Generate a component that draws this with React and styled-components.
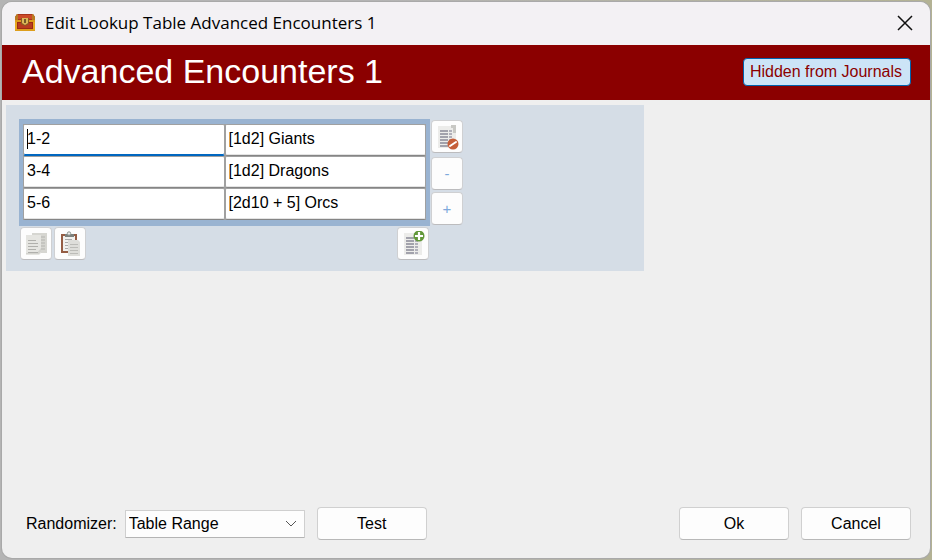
import { useState } from "react";
import styled, { createGlobalStyle } from "styled-components";

const ROWS = [
  { range: "1-2", result: "[1d2] Giants" },
  { range: "3-4", result: "[1d2] Dragons" },
  { range: "5-6", result: "[2d10 + 5] Orcs" },
];

const ChestIcon = () => (
  <svg width="20" height="17" viewBox="0 0 20 17" aria-hidden="true">
    <path d="M2 0h16l2 3v4H0V3z" fill="#a8321a" />
    <path d="M3 1h14v4H3z" fill="#cb4a28" />
    <path d="M1 8h18v8H1z" fill="#9c2a16" />
    <path d="M3 9h14v5H3z" fill="#b93c20" />
    <path d="M0 6h20v2H0zM0 15h20v2H0z" fill="#dd9e1c" />
    <path d="M0 3l2-3h1v6H0zM20 3l-2-3h-1v6h3z" fill="#b87a20" />
    <path d="M0 8h2v8H0zM18 8h2v8h-2z" fill="#e8aa22" />
    <path d="M6 4h8v6l-4 2-4-2z" fill="#8c5a24" />
    <path d="M7 4h6v5l-3 2-3-2z" fill="#dcb858" />
    <path d="M9 5h2v4H9z" fill="#75592a" />
  </svg>
);

const CloseIcon = () => (
  <svg width="16" height="16" viewBox="0 0 16 16" aria-hidden="true">
    <path d="M1 1l14 14M15 1L1 15" stroke="#111" strokeWidth="1.5" fill="none" />
  </svg>
);

const SheetRows = () => (
  <>
    <path d="M3 2h18v22H3z" fill="#ececea" />
    <path
      d="M5 6h8v2H5zM5 9h8v2H5zM5 12h8v2H5zM5 15h8v2H5zM5 18h8v2H5zM5 21h8v2H5z"
      fill="#a2a2ac"
    />
    <path
      d="M14 6h3v2h-3zM14 9h3v2h-3zM14 12h3v2h-3zM14 15h3v2h-3zM14 18h3v2h-3zM14 21h3v2h-3z"
      fill="#b0b0ba"
    />
  </>
);

const RemoveTableIcon = () => (
  <svg width="24" height="26" viewBox="0 0 24 26" aria-hidden="true">
    <SheetRows />
    <path d="M16 1h5v8h-3V4h-2z" fill="#c8c8c4" />
    <circle cx="18" cy="20" r="5.5" fill="#c65f3a" />
    <path d="M15 22l6-4" stroke="#fff" strokeWidth="2" strokeLinecap="round" />
  </svg>
);

const AddTableIcon = () => (
  <svg width="24" height="26" viewBox="0 0 24 26" aria-hidden="true">
    <SheetRows />
    <circle cx="18" cy="5" r="5.5" fill="#62983a" />
    <path d="M14 5h8M18 1v8" stroke="#fff" strokeWidth="2.2" />
  </svg>
);

const CopyIcon = () => (
  <svg width="24" height="26" viewBox="0 0 24 26" aria-hidden="true">
    <path d="M8 2h15v20H8z" fill="#d6d6d1" />
    <path d="M17 6h4M17 9h4M17 12h4M17 15h4M17 18h4" stroke="#b4b4b0" />
    <path d="M2 4h15v18l-2 2H2z" fill="#e5e5e1" />
    <path d="M2 23h13l2-2v-4l-4 5H2z" fill="#d3d3ce" />
    <path
      d="M4 9.5h8M4 12.5h10M4 15.5h10M4 18.5h8M4 21.5h10"
      stroke="#b0b0ac"
    />
  </svg>
);

const PasteIcon = () => (
  <svg width="24" height="26" viewBox="0 0 24 26" aria-hidden="true">
    <path d="M3 3h16v19H3z" fill="#955d44" />
    <path d="M5 5h12v15H5z" fill="#f1f1ee" />
    <path d="M7 3h9v3H7z" fill="#7d817d" />
    <circle cx="11" cy="2.5" r="1.7" fill="#eee" stroke="#8d9590" />
    <path d="M7 8.5h7M7 11.5h5M7 14.5h3M7 17.5h3" stroke="#aaa" />
    <path d="M10 9h10l2 2v14H10z" fill="#dededa" />
    <path d="M12 13.5h8M12 16.5h8M12 19.5h8M12 22.5h8" stroke="#bcbcb8" />
  </svg>
);

const App = () => {
  const [rows, setRows] = useState(ROWS);

  const edit = (index, key, value) =>
    setRows(rows.map((row, i) => (i === index ? { ...row, [key]: value } : row)));

  return (
    <>
      <GlobalStyle />
      <Backdrop>
        <Dialog role="dialog" aria-labelledby="dialog-title">
          <TitleBar>
            <ChestIcon />
            <Title id="dialog-title">Edit Lookup Table Advanced Encounters 1</Title>
            <CloseButton type="button" aria-label="Close">
              <CloseIcon />
            </CloseButton>
          </TitleBar>
          <Banner>
            <h1>Advanced Encounters 1</h1>
            <Visibility type="button">Hidden from Journals</Visibility>
          </Banner>
          <Content>
            <Panel>
              <Main>
                <Lookup>
                  <tbody>
                    {rows.map((row, i) => (
                      <tr key={i}>
                        <td>
                          <Cell
                            $active={i === 0}
                            aria-label={`Range ${i + 1}`}
                            value={row.range}
                            onChange={(e) => edit(i, "range", e.target.value)}
                          />
                        </td>
                        <td>
                          <Cell
                            aria-label={`Result ${i + 1}`}
                            value={row.result}
                            onChange={(e) => edit(i, "result", e.target.value)}
                          />
                        </td>
                      </tr>
                    ))}
                  </tbody>
                </Lookup>
                <Tools>
                  <ToolButton type="button" aria-label="Copy table">
                    <CopyIcon />
                  </ToolButton>
                  <ToolButton type="button" aria-label="Paste table">
                    <PasteIcon />
                  </ToolButton>
                  <Spacer />
                  <ToolButton type="button" aria-label="Add column">
                    <AddTableIcon />
                  </ToolButton>
                </Tools>
              </Main>
              <Side>
                <ToolButton type="button" aria-label="Remove column">
                  <RemoveTableIcon />
                </ToolButton>
                <RowButtons>
                  <ToolButton type="button" aria-label="Remove row">-</ToolButton>
                  <ToolButton type="button" aria-label="Add row">+</ToolButton>
                </RowButtons>
              </Side>
            </Panel>
          </Content>
          <Footer>
            <label htmlFor="randomizer">Randomizer:</label>
            <Select id="randomizer" defaultValue="range">
              <option value="range">Table Range</option>
            </Select>
            <Button type="button">Test</Button>
            <Spacer />
            <Button type="button">Ok</Button>
            <Button type="button">Cancel</Button>
          </Footer>
        </Dialog>
      </Backdrop>
    </>
  );
};

const GlobalStyle = createGlobalStyle`
  * {
    box-sizing: border-box;
  }
  body {
    margin: 0;
    color: #000;
    font-family: "Liberation Sans", Arial, sans-serif;
    font-size: 16px;
  }
  button, input, select {
    font: inherit;
    color: inherit;
  }
`;

const Backdrop = styled.div`
  min-height: 100vh;
  padding: 2px;
  display: flex;
  background: linear-gradient(90deg, #b4b4b4 40%, #b3b294);
`;

const Dialog = styled.main`
  flex: 1;
  display: flex;
  flex-direction: column;
  border-radius: 10px;
  overflow: hidden;
  background: #efefef;
  box-shadow: 0 0 0 1px #a9a9a9;
`;

const TitleBar = styled.header`
  height: 43px;
  padding: 0 17px 2px 13px;
  display: flex;
  align-items: center;
  gap: 10px;
  background: #f3f1f4;
`;

const Title = styled.div`
  flex: 1;
  font-family: "Open Sans", "Segoe UI", sans-serif;
  font-size: 17px;
  line-height: 24px;
`;

const CloseButton = styled.button`
  padding: 0;
  display: flex;
  border: 0;
  background: none;
`;

const Banner = styled.section`
  height: 55px;
  padding: 0 19px 2px 20px;
  display: flex;
  align-items: center;
  justify-content: space-between;
  background: #8b0000;

  h1 {
    margin: 0;
    padding-bottom: 2px;
    color: #fff;
    font-size: 34px;
    font-weight: 400;
    line-height: 40px;
  }
`;

const Visibility = styled.button`
  height: 28px;
  width: 168px;
  padding: 1px 2px 0 0;
  border: 1px solid #0062ad;
  border-radius: 4px;
  background: #cce4f7;
  color: #8b0000;
`;

const Content = styled.section`
  flex: 1;
  padding: 5px 4px;
`;

const Panel = styled.div`
  max-width: 638px;
  padding: 14px 13px 11px;
  display: flex;
  gap: 1px;
  background: #d5dde6;
`;

const Main = styled.div`
  flex: 0 1 411px;
`;

const Lookup = styled.table`
  width: 100%;
  border: 5px solid #99b3d1;
  border-width: 5px 4px 6px;
  border-spacing: 0;
  background: #a0a0a0;
  table-layout: fixed;

  td {
    padding: 0;
  }
`;

const Cell = styled.input`
  display: block;
  width: 100%;
  height: 32px;
  padding: 0 3px 2px;
  border: 1px solid #a0a0a0;
  border-bottom: 1px solid ${(props) => (props.$active ? "#0067c0" : "#858585")};
  border-radius: 2px;
  outline: 0;
  background: ${(props) =>
    props.$active
      ? "linear-gradient(#000, #000) 3px 4px / 1px 20px no-repeat #fff"
      : "#fff"};
  box-shadow: inset 0 -1px 0 ${(props) => (props.$active ? "#0067c0" : "#e4e4e4")};
`;

const Tools = styled.div`
  padding: 1px 1px 0;
  display: flex;
  gap: 2px;
`;

const Spacer = styled.div`
  flex: 1;
`;

const Side = styled.div`
  padding-top: 1px;
  display: flex;
  flex-direction: column;
  gap: 4px;
`;

const RowButtons = styled.div`
  display: flex;
  flex-direction: column;
  gap: 2px;
`;

const ToolButton = styled.button`
  width: 32px;
  height: 33px;
  padding: 0;
  display: flex;
  align-items: center;
  justify-content: center;
  border: 1px solid #cfd0d2;
  border-bottom-color: #bcbcbe;
  border-radius: 4px;
  background: #fdfdfd;
  color: #7ea9dc;
  font-size: 15px;
`;

const Footer = styled.footer`
  padding: 0 19px 18px 24px;
  display: flex;
  align-items: center;
  gap: 12px;

  label {
    margin-right: -4px;
  }
`;

const Select = styled.select`
  width: 180px;
  height: 28px;
  padding: 0 24px 0 3px;
  border: 1px solid #cfcfcf;
  border-bottom-color: #b4b4b4;
  border-radius: 1px;
  appearance: none;
  background: #fdfdfd
    url("data:image/svg+xml,%3Csvg xmlns='http://www.w3.org/2000/svg' width='12' height='7'%3E%3Cpath d='M1 1l5 5 5-5' fill='none' stroke='%23555'/%3E%3C/svg%3E")
    no-repeat right 7px center;
`;

const Button = styled.button`
  width: 110px;
  height: 33px;
  padding: 0;
  border: 1px solid #d0d0d0;
  border-bottom-color: #b8b8b8;
  border-radius: 4px;
  background: #fdfdfd;
`;

export default App;
